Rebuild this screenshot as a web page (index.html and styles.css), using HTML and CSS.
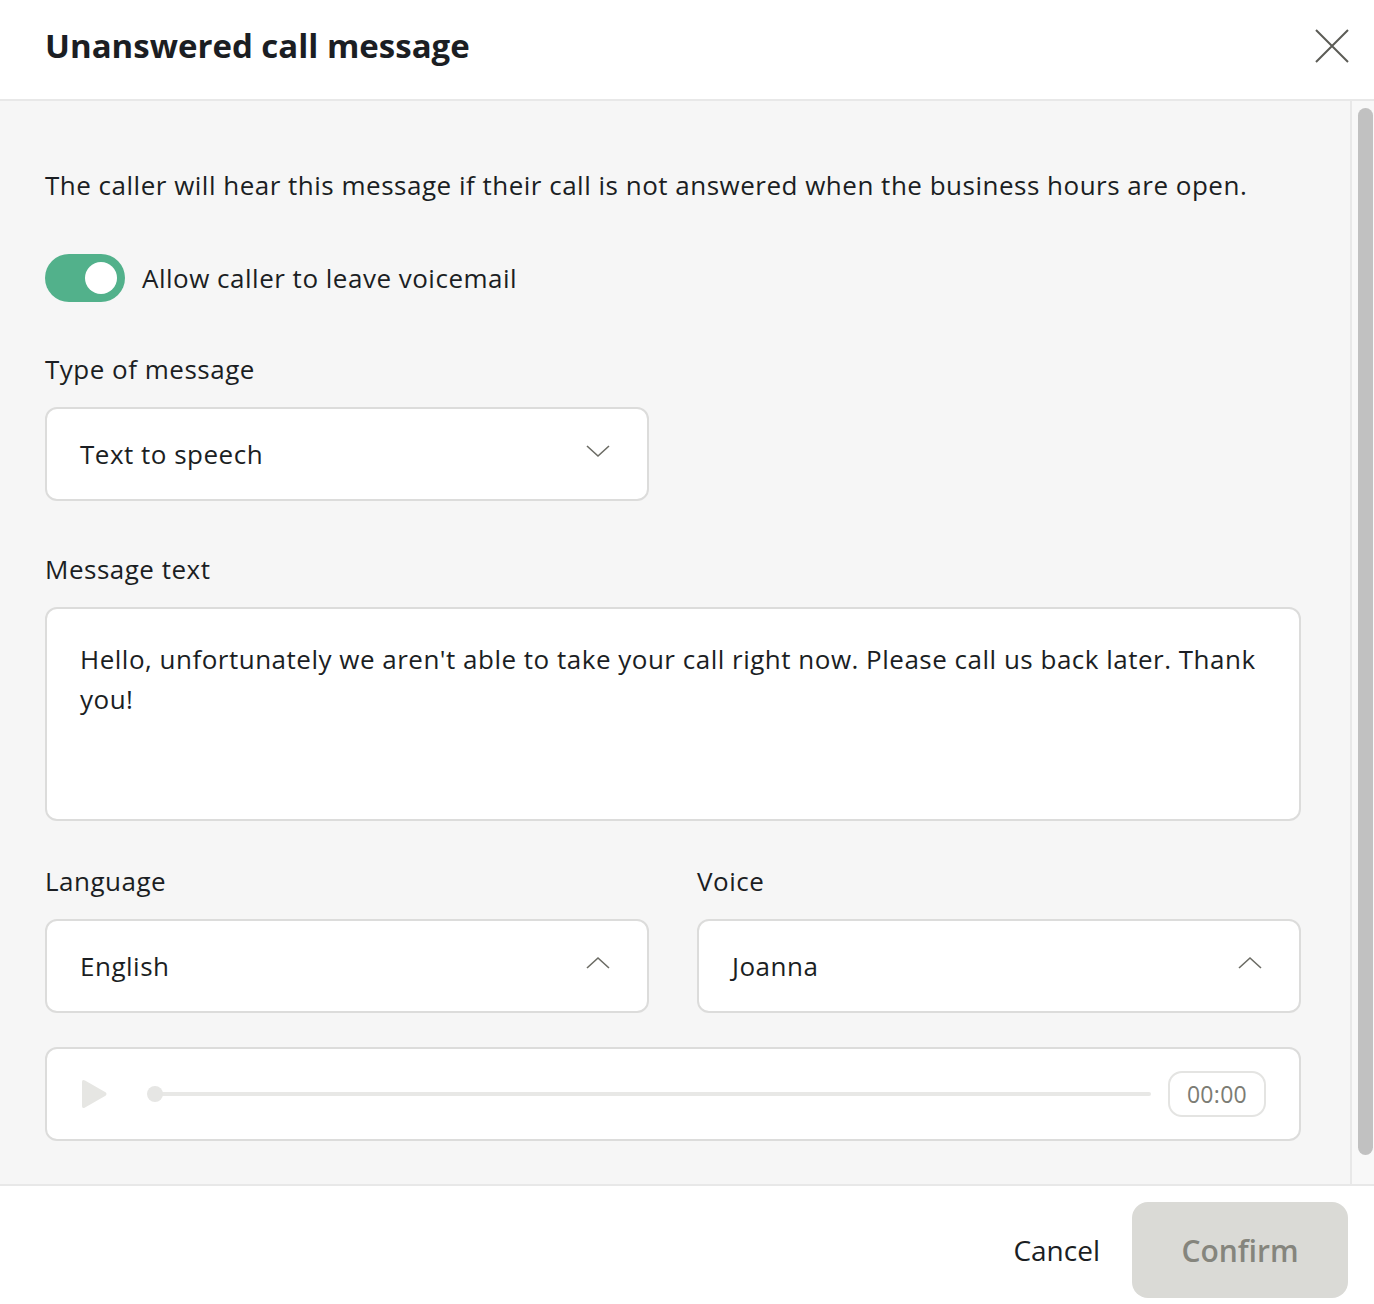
FILE: index.html
```html
<!DOCTYPE html>
<html lang="en">
  <head>
    <meta charset="UTF-8" />
    <meta name="viewport" content="width=device-width, initial-scale=1.0" />
    <title>Unanswered call message</title>
    <link rel="stylesheet" href="styles.css">
  </head>
  <body>
    <div class="modal">
      <div class="modal-header">
        <h1 class="modal-title">Unanswered call message</h1>
        <button class="close-btn" aria-label="Close">
          <svg width="34" height="34" viewBox="0 0 34 34">
            <path d="M1 1 L33 33 M33 1 L1 33" stroke="#5c5c56" stroke-width="2" fill="none" />
          </svg>
        </button>
      </div>

      <div class="modal-body">
        <div class="body-content">
          <p class="intro">The caller will hear this message if their call is not answered when the business hours are open.</p>

          <label class="switch-row">
            <span class="switch"><span class="knob"></span></span>
            <span class="switch-label">Allow caller to leave voicemail</span>
          </label>

          <div class="field">
            <div class="field-label">Type of message</div>
            <div class="select half">
              <span>Text to speech</span>
              <svg class="chev" width="24" height="14" viewBox="0 0 24 14">
                <path d="M1 2 L12 12 L23 2" stroke="#6b6b64" stroke-width="1.6" fill="none" />
              </svg>
            </div>
          </div>

          <div class="field">
            <div class="field-label">Message text</div>
            <div class="textarea">Hello, unfortunately we aren't able to take your call right now. Please call us back later. Thank you!</div>
          </div>

          <div class="field-grid">
            <div class="field">
              <div class="field-label">Language</div>
              <div class="select">
                <span>English</span>
                <svg class="chev" width="24" height="14" viewBox="0 0 24 14">
                  <path d="M1 12 L12 2 L23 12" stroke="#6b6b64" stroke-width="1.6" fill="none" />
                </svg>
              </div>
            </div>
            <div class="field">
              <div class="field-label">Voice</div>
              <div class="select">
                <span>Joanna</span>
                <svg class="chev" width="24" height="14" viewBox="0 0 24 14">
                  <path d="M1 12 L12 2 L23 12" stroke="#6b6b64" stroke-width="1.6" fill="none" />
                </svg>
              </div>
            </div>
          </div>

          <div class="player">
            <svg class="play" width="28" height="30" viewBox="0 0 28 30">
              <path d="M2 3 Q2 0 5 1.5 L25.5 13.3 Q27.5 15 25.5 16.7 L5 28.5 Q2 30 2 27 Z" fill="#e6e6e3" />
            </svg>
            <div class="track"><span class="dot"></span></div>
            <div class="time">00:00</div>
          </div>
        </div>

        <div class="scroll-rail"><div class="scroll-thumb"></div></div>
      </div>

      <div class="modal-footer">
        <button class="btn-cancel">Cancel</button>
        <button class="btn-confirm" disabled>Confirm</button>
      </div>
    </div>
  </body>
</html>
```

FILE: styles.css
```css
body {
  margin: 0;
  font-family: "Open Sans", Lato, sans-serif;
  color: #1b1e23;
  background-color: #ffffff;
}

.modal {
  display: flex;
  flex-direction: column;
  height: 100vh;
}

.modal-header {
  display: flex;
  align-items: center;
  justify-content: space-between;
  height: 99px;
  padding: 0 25px 0 45px;
  border-bottom: 2px solid #e8e8e8;
  background-color: #fff;
}

.modal-title {
  margin: 0 0 8px;
  font-size: 33px;
  font-weight: 700;
  letter-spacing: 0;
}

.close-btn {
  background: none;
  border: none;
  padding: 0;
  cursor: pointer;
  display: flex;
  margin-top: -8px;
}

.modal-body {
  flex: 1;
  display: flex;
  min-height: 0;
  background-color: #f6f6f6;
}

.body-content {
  flex: 1;
  overflow: hidden;
  padding: 66px 49px 0 45px;
  letter-spacing: 0.5px;
}

.scroll-rail {
  width: 24px;
  box-sizing: border-box;
  display: flex;
  padding: 7px 1px 29px 6px;
  border-left: 2px solid #e8e8e8;
  background-color: #f8f8f8;
}

.scroll-thumb {
  flex: 1;
  border-radius: 8px;
  background-color: #c1c1c1;
}

.intro {
  margin: 0 0 51px;
  font-size: 26px;
  line-height: 36px;
}

.switch-row {
  display: flex;
  align-items: center;
  gap: 17px;
  margin-bottom: 49px;
}

.switch {
  width: 80px;
  height: 48px;
  border-radius: 24px;
  background-color: #52b18b;
  display: flex;
  align-items: center;
  justify-content: flex-end;
  padding-right: 8px;
  box-sizing: border-box;
}

.knob {
  width: 32px;
  height: 32px;
  border-radius: 50%;
  background-color: #fff;
}

.switch-label {
  font-size: 26px;
}

.field {
  margin-bottom: 50px;
}

.field-label {
  font-size: 26px;
  line-height: 36px;
  margin-bottom: 20px;
}

.select {
  display: flex;
  align-items: center;
  justify-content: space-between;
  height: 94px;
  box-sizing: border-box;
  padding: 0 37px 0 33px;
  background-color: #fff;
  border: 2px solid #dcdcdb;
  border-radius: 12px;
  font-size: 26px;
}

.select.half {
  width: 604px;
}

.chev {
  margin-top: -6px;
}

.textarea {
  height: 214px;
  box-sizing: border-box;
  padding: 30px 40px 0 33px;
  background-color: #fff;
  border: 2px solid #dcdcdb;
  border-radius: 12px;
  font-size: 26px;
  line-height: 40px;
}

.field-grid {
  display: grid;
  grid-template-columns: 1fr 1fr;
  column-gap: 48px;
  margin-top: -8px;
}

.field-grid .field {
  margin-bottom: 34px;
}

.player {
  display: flex;
  align-items: center;
  height: 94px;
  box-sizing: border-box;
  padding: 0 33px 0 33px;
  background-color: #fff;
  border: 2px solid #dcdcdb;
  border-radius: 12px;
}

.play {
  margin-right: 47px;
}

.track {
  position: relative;
  flex: 1;
  height: 4px;
  border-radius: 2px;
  background-color: #e8e8e6;
  margin-right: 17px;
}

.dot {
  position: absolute;
  left: -8px;
  top: -6px;
  width: 16px;
  height: 16px;
  border-radius: 50%;
  background-color: #e6e6e4;
}

.time {
  width: 98px;
  height: 46px;
  box-sizing: border-box;
  border: 2px solid #e4e4e2;
  border-radius: 14px;
  display: flex;
  align-items: center;
  justify-content: center;
  font-size: 23px;
  letter-spacing: 0.3px;
  color: #7c7c74;
}

.modal-footer {
  display: flex;
  align-items: flex-start;
  justify-content: flex-end;
  gap: 32px;
  height: 120px;
  box-sizing: border-box;
  padding: 16px 26px 0 45px;
  border-top: 2px solid #e8e8e8;
  background-color: #fff;
}

.btn-cancel {
  height: 96px;
  background: none;
  border: none;
  padding: 0;
  font-family: inherit;
  font-size: 28px;
  color: #1b1e23;
  cursor: pointer;
}

.btn-confirm {
  width: 216px;
  height: 96px;
  border: none;
  border-radius: 16px;
  background-color: #dadad6;
  color: #85857d;
  font-family: inherit;
  font-size: 30px;
  font-weight: 600;
}
```
